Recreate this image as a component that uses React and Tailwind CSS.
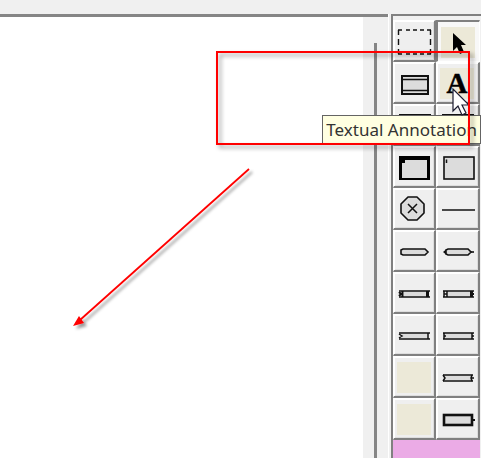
const Icon = ({ children }) => (
  <svg viewBox="0 0 40 39" className="w-10 h-[39px] shrink-0" fill="none" stroke="#111" aria-hidden="true">
    {children}
  </svg>
)

const Swatch = () => <rect x="3" y="5" width="34" height="31" fill="#ece9d8" stroke="none" />

const tools = [
  {
    name: 'Marquee',
    icon: (
      <>
        <path d="M4 9H8M12 9H16M19 9H23M26 9H30M33 9H37M4 33H8M12 33H16M19 33H23M26 33H30M33 33H37" strokeWidth="1.6" />
        <path d="M4.500 9V14M4.500 18V24M4.500 28V33M36.500 9V14M36.500 18V24M36.500 28V33" strokeWidth="1.4" />
      </>
    ),
  },
  {
    name: 'Select',
    selected: true,
    icon: (
      <>
        <Swatch />
        <path d="M15 11V29L19 25L22 32L26 30L23 23H28Z" fill="#000" stroke="none" />
      </>
    ),
  },
  {
    name: 'Class',
    icon: (
      <>
        <rect x="8" y="13" width="26" height="18" fill="#dcdcdc" strokeWidth="2" />
        <path d="M8 16.500H34M8 27.500H34" strokeWidth="1.5" />
      </>
    ),
  },
  {
    name: 'Textual Annotation',
    icon: (
      <>
        <Swatch />
        <text x="20" y="30" textAnchor="middle" fill="#000" stroke="#000" strokeWidth="0.5" className="font-['Liberation_Serif',serif] text-[29px] font-bold">
          A
        </text>
      </>
    ),
  },
  { name: 'Frame', icon: <rect x="6" y="10" width="30" height="20" fill="#dcdcdc" strokeWidth="2" /> },
  { name: 'Panel', icon: <rect x="6" y="10" width="30" height="20" fill="#dcdcdc" strokeWidth="2" /> },
  {
    name: 'Process',
    icon: (
      <>
        <rect x="5" y="9" width="31" height="24" fill="#000" stroke="none" />
        <path d="M11 13H33V31H8V16H11Z" fill="#dcdcdc" stroke="none" />
      </>
    ),
  },
  {
    name: 'Component',
    icon: (
      <>
        <rect x="7" y="10" width="30" height="22" fill="#dcdcdc" strokeWidth="1.6" />
        <path d="M9.500 12.500V16" strokeWidth="1.5" />
      </>
    ),
  },
  {
    name: 'Terminate',
    icon: (
      <>
        <path d="M14 8H23L30 15V24L23 31H14L7 24V15Z" fill="#dcdcdc" strokeWidth="1.6" strokeLinejoin="round" />
        <path d="M14 15L23 24M23 15L14 24" strokeWidth="1.5" />
      </>
    ),
  },
  { name: 'Line', icon: <path d="M5 21H38" strokeWidth="1.6" /> },
  {
    name: 'Action',
    icon: <path d="M9 18H31L34 21L31 24H9L7 23V19Z" fill="#dcdcdc" strokeWidth="1.6" />,
  },
  {
    name: 'Decision',
    icon: (
      <>
        <path d="M11 18H31L34 21L31 24H11L9 23V19Z" fill="#dcdcdc" strokeWidth="1.6" />
        <path d="M6 21L9 18.500V23.500Z" fill="#111" stroke="none" />
        <path d="M34 21H37" strokeWidth="1.6" />
      </>
    ),
  },
  {
    name: 'Input',
    icon: (
      <>
        <path d="M10 19H32V23H10Z" fill="#dcdcdc" stroke="none" />
        <path d="M5 18H36M5 24H36" strokeWidth="1.7" />
        <path d="M5 19L7 21L5 23M8.500 18V24" strokeWidth="2" />
        <path d="M33.500 18V24" strokeWidth="3" />
      </>
    ),
  },
  {
    name: 'Output',
    icon: (
      <>
        <path d="M11 19H33V23H11Z" fill="#dcdcdc" stroke="none" />
        <path d="M6 18H37M6 24H37" strokeWidth="1.7" />
        <path d="M7 18V24M10 18V24M7 21H10" strokeWidth="1.5" />
        <path d="M34.500 18V24" strokeWidth="3" />
        <path d="M34 21H37" strokeWidth="2" />
      </>
    ),
  },
  {
    name: 'Procedure start',
    icon: (
      <>
        <path d="M8 19H34V23H8Z" fill="#dcdcdc" stroke="none" />
        <path d="M5 18H36M5 24H36" strokeWidth="1.7" />
        <path d="M5 19L8 21L5 23M34 18V24" strokeWidth="1.5" />
      </>
    ),
  },
  {
    name: 'Procedure return',
    icon: (
      <>
        <path d="M8 19H34V23H8Z" fill="#dcdcdc" stroke="none" />
        <path d="M6 18H37M6 24H37" strokeWidth="1.7" />
        <path d="M7 18V24M7 21H9M35 18V24M35 21H37" strokeWidth="1.5" />
      </>
    ),
  },
  { name: 'Custom 1', icon: <Swatch /> },
  {
    name: 'Alternative',
    icon: (
      <>
        <path d="M8 19H34V23H8Z" fill="#dcdcdc" stroke="none" />
        <path d="M6 18H36M6 24H36" strokeWidth="1.7" />
        <path d="M6 18L8 21L6 24M35 18L34 21L35 24M34 21H37" strokeWidth="1.5" />
      </>
    ),
  },
  { name: 'Custom 2', icon: <Swatch /> },
  {
    name: 'Task',
    icon: (
      <>
        <rect x="7" y="16" width="28" height="10" fill="#dcdcdc" strokeWidth="2.600" />
        <path d="M35 21H38" strokeWidth="2" />
      </>
    ),
  },
]

const ToolButton = ({ tool }) => (
  <button
    type="button"
    aria-label={tool.name}
    aria-pressed={Boolean(tool.selected)}
    className={
      tool.selected
        ? 'h-[42px] flex overflow-hidden bg-[#f8f8f8] border-t-2 border-l-2 border-r border-b border-t-[#808080] border-l-[#808080] border-r-white border-b-white'
        : 'h-[42px] flex overflow-hidden bg-[#efefef] border-t border-l border-r-2 border-b-2 border-t-white border-l-white border-r-[#808080] border-b-[#808080] shadow-[inset_1px_1px_0_#fff,inset_-1px_-1px_0_#ddd]'
    }
  >
    <Icon>{tool.icon}</Icon>
  </button>
)

const Canvas = () => (
  <main className="flex-1 min-w-0 flex bg-white border-t-[3px] border-[#858585]">
    <svg className="w-[300px] h-[340px]" viewBox="0 17 300 340" role="img" aria-label="Arrow">
      <defs>
        <filter id="shadow" x="-20%" y="-20%" width="150%" height="150%">
          <feDropShadow dx="3" dy="3" stdDeviation="1.5" floodColor="#000" floodOpacity="0.4" />
        </filter>
      </defs>
      <g filter="url(#shadow)">
        <path d="M249 169L80 320" stroke="#f00" strokeWidth="1.8" />
        <path d="M73 326L79 316L84 323Z" fill="#f00" />
      </g>
    </svg>
  </main>
)

const Palette = () => (
  <aside className="w-[90px] shrink-0 flex flex-col border-t-2 border-l-2 border-[#808080] bg-[#f0f0f0]">
    <div className="grid grid-cols-[43px_1fr] pr-px pt-1">
      {tools.map((tool) => (
        <ToolButton key={tool.name} tool={tool} />
      ))}
    </div>
    <div className="flex-1 mr-px bg-[#ebabe6]" />
  </aside>
)

const App = () => {
  return (
    <div className="relative min-h-screen flex flex-col overflow-hidden bg-[#f0f0f0]">
      <header className="h-[14px] shrink-0" />
      <div className="flex-1 flex">
        <Canvas />
        {/* Splitter between canvas and palette */}
        <div className="w-[25px] shrink-0 flex justify-center border-t-[3px] border-[#858585]">
          <div className="w-[3px] mt-[26px] bg-[#858585]" />
        </div>
        <div className="w-[3px] shrink-0 border-l border-white" />
        <Palette />
      </div>

      {/* Tooltip */}
      <div
        role="tooltip"
        className="absolute top-[115px] right-0 h-[29px] px-[3px] flex items-center whitespace-nowrap border border-[#646464] bg-[#ffffe1] text-[#333] text-[17px] font-['Noto_Sans','Open_Sans',sans-serif]"
      >
        Textual Annotation
      </div>

      {/* Mouse pointer */}
      <svg viewBox="0 0 18 29" className="absolute top-[88px] right-[11px] w-[18px] h-[29px]" aria-hidden="true">
        <path d="M1 1V23L6 18L10 27L14 25L10 17H17Z" fill="#fff" stroke="#1a1a2e" strokeWidth="1.2" />
      </svg>

      {/* Highlight frame */}
      <div className="absolute top-[51px] right-[11px] w-[254px] h-[94px] border-2 border-[#f00] drop-shadow-[3px_3px_2px_rgba(0,0,0,0.4)]" />
    </div>
  )
}

export default App
